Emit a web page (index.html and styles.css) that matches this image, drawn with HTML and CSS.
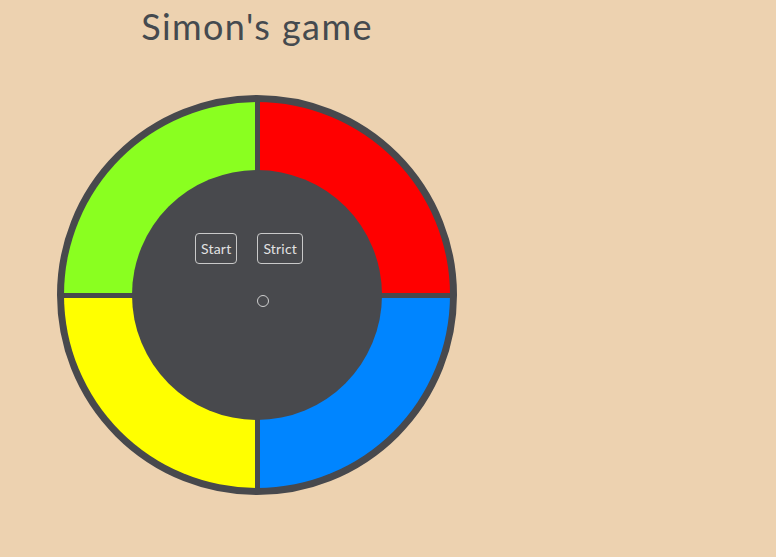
FILE: index.html
```html
<!DOCTYPE html>
<html>
<head>
<meta charset="utf-8">
<link rel="stylesheet" href="styles.css">
</head>
<body>
<div class="app">
  <h1 class="title">Simon's game</h1>
  <div class="board-wrap">
    <div class="board">
      <div class="pad green"></div>
      <div class="pad red"></div>
      <div class="pad yellow"></div>
      <div class="pad blue"></div>
    </div>
    <div class="center">
      <div class="controls">
        <button class="btn">Start</button>
        <button class="btn">Strict</button>
      </div>
      <div class="led"></div>
    </div>
  </div>
</div>
</body>
</html>
```
FILE: styles.css
```css
html, body {
  margin: 0;
  padding: 0;
  background: #edd2b0;
  height: 100%;
}
.app {
  width: 400px;
  margin-left: 57px;
  padding-top: 5px;
}
.title {
  margin: 0;
  text-align: center;
  font-family: Lato, "Open Sans", sans-serif;
  font-weight: 400;
  font-size: 36px;
  line-height: 42px;
  color: #454a4f;
  letter-spacing: 1.4px;
}
.board-wrap {
  position: relative;
  width: 400px;
  height: 400px;
  margin-top: 48px;
}
.board {
  box-sizing: border-box;
  width: 400px;
  height: 400px;
  border: 7px solid #48494d;
  border-radius: 50%;
  background: #48494d;
  overflow: hidden;
  display: grid;
  grid-template-columns: 1fr 1fr;
  grid-template-rows: 1fr 1fr;
  gap: 5px;
}
.green { background: #8aff20; }
.red { background: #ff0000; }
.yellow { background: #ffff00; }
.blue { background: #0085ff; }
.center {
  position: absolute;
  left: 75px;
  top: 75px;
  width: 250px;
  height: 250px;
  border-radius: 50%;
  background: #48494d;
  display: flex;
  flex-direction: column;
  align-items: flex-start;
  padding-top: 63px;
  box-sizing: border-box;
}
.controls {
  display: flex;
  gap: 20px;
  padding-left: 63px;
}
.btn {
  box-sizing: border-box;
  height: 31px;
  padding: 0 5px;
  background: transparent;
  border: 1px solid #c9c9c9;
  border-radius: 4px;
  color: #e2e2e2;
  font-family: Lato, "Open Sans", sans-serif;
  font-size: 14px;
  letter-spacing: 0.2px;
}
.led {
  box-sizing: border-box;
  width: 12px;
  height: 12px;
  margin-top: 31px;
  margin-left: 125px;
  border: 1.5px solid #cfcfcf;
  border-radius: 50%;
}
```
